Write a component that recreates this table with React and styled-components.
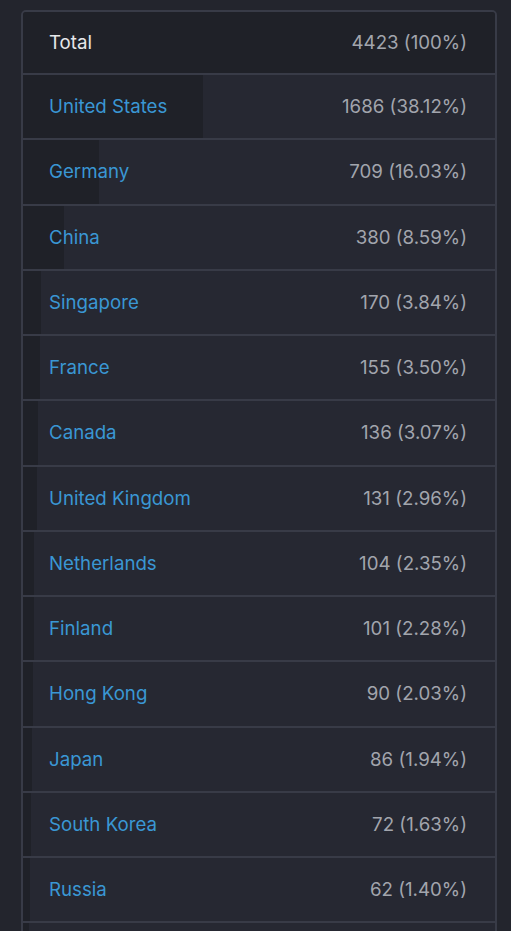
import React from 'react'
import styled, { createGlobalStyle } from 'styled-components';

const total = 4423;

const countries = [
  ['United States', 1686, '38.12'],
  ['Germany', 709, '16.03'],
  ['China', 380, '8.59'],
  ['Singapore', 170, '3.84'],
  ['France', 155, '3.50'],
  ['Canada', 136, '3.07'],
  ['United Kingdom', 131, '2.96'],
  ['Netherlands', 104, '2.35'],
  ['Finland', 101, '2.28'],
  ['Hong Kong', 90, '2.03'],
  ['Japan', 86, '1.94'],
  ['South Korea', 72, '1.63'],
  ['Russia', 62, '1.40'],
];

function App() {
  return (
    <Page>
      <GlobalStyle />
      <Table>
        <Row $total>
          <Bar style={{ width: '100%' }} />
          <Label $total>Total</Label>
          <Count>{total} (100%)</Count>
        </Row>
        {countries.map(([name, n, pct]) => (
          <Row key={name}>
            <Bar style={{ width: `${(n / total) * 100}%` }} />
            <Label href="#">{name}</Label>
            <Count>{n} ({pct}%)</Count>
          </Row>
        ))}
        {/* next row, cut off by the window */}
        <Row>
          <Bar style={{ width: '1.3%' }} />
        </Row>
      </Table>
    </Page>
  )
}

export default App

const GlobalStyle = createGlobalStyle`
  body {
    margin: 0;
    background: #23252d;
    font-family: Inter, Roboto, "Liberation Sans", sans-serif;
  }
`;

const Page = styled.div`
  padding: 10px 14px 0 21px;
  height: 931px;
  overflow: hidden;
  box-sizing: border-box;
`;

const Table = styled.div`
  border: 2px solid #383b47;
  border-radius: 5px;
  background: #262832;
  overflow: hidden;
`;

const Row = styled.div`
  position: relative;
  display: flex;
  align-items: center;
  justify-content: space-between;
  height: ${p => (p.$total ? '61px' : '63.25px')};
  padding: 0 28px 0 26px;
  border-bottom: 2px solid #383b47;
`;

const Bar = styled.div`
  position: absolute;
  left: 0;
  top: 0;
  bottom: 0;
  background: #1f2128;
`;

const Label = styled.a`
  position: relative;
  font-size: 18.7px;
  color: ${p => (p.$total ? '#e6e7ea' : '#3a97d4')};
  text-decoration: none;
`;

const Count = styled.span`
  position: relative;
  font-size: 18.7px;
  color: #a2a5ad;
`;
